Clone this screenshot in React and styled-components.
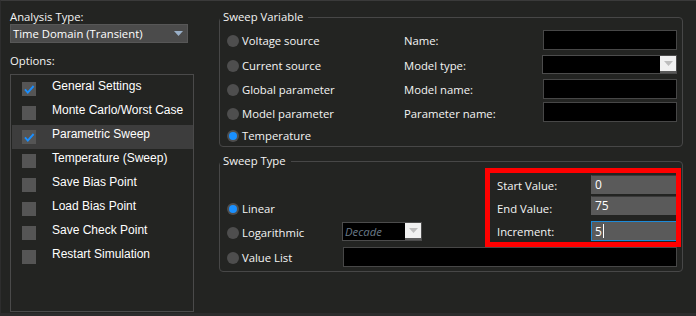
import React from 'react';
import styled, { createGlobalStyle } from 'styled-components';

const Global = createGlobalStyle`
  html, body { margin: 0; padding: 0; background: #232422; }
  *, *::before, *::after { box-sizing: border-box; }
`;

const UI = `"Open Sans", "Noto Sans", sans-serif`;

const Window = styled.div`
  width: 696px;
  height: 316px;
  background: #232422;
  border-top: 1px solid #3a3a3a;
  border-left: 1px solid #2d2d2d;
  border-bottom: 3px solid #2c2c2c;
  padding: 9px 0 0 9px;
  display: flex;
  gap: 25px;
  font-family: ${UI};
  font-size: 11.3px;
  color: #f4f4f4;
  overflow: hidden;
`;

const LeftCol = styled.div`
  width: 184px;
  display: flex;
  flex-direction: column;
`;

const FieldLabel = styled.div`
  line-height: 14px;
  height: 14px;
  margin-top: ${p => p.$mt || 0}px;
  white-space: nowrap;
`;

const Select = styled.div`
  width: 178px;
  height: 19px;
  background: #4b4b4b;
  border: 1px solid #575757;
  display: flex;
  align-items: center;
  justify-content: space-between;
  padding: 0 4px 0 2px;
  font-size: 11.3px;
  color: #fff;
`;

const OptionsList = styled.div`
  margin-top: 6px;
  height: 238px;
  border: 1px solid #4a4a4a;
  padding: 2px 0 0 1px;
  display: flex;
  flex-direction: column;
`;

const OptionRow = styled.div`
  height: 24px;
  display: flex;
  align-items: center;
  padding-left: 10px;
  gap: 16px;
  background: ${p => (p.$selected ? '#3d3d3d' : 'transparent')};
  font-family: "Liberation Sans", Arial, sans-serif;
  font-size: 12px;
  color: #fff;
`;

const OptionText = styled.span`
  line-height: 14px;
  margin-bottom: 7px;
  white-space: nowrap;
`;

const CheckBox = styled.span`
  width: 14px;
  height: 14px;
  background: #555;
  display: inline-flex;
  flex: none;
`;

const RightCol = styled.div`
  width: 464px;
  display: flex;
  flex-direction: column;
`;

const Group = styled.fieldset`
  margin: ${p => p.$mt || 0}px 0 0 0;
  padding: ${p => p.$pad};
  border: 1px solid #474747;
  border-radius: 4px;
  min-width: 0;
`;

const Legend = styled.legend`
  padding: 0 5px 0 3px;
  margin-left: -7px;
  line-height: 14px;
  font-size: 11.3px;
  color: #f4f4f4;
`;

const VarGrid = styled.div`
  display: grid;
  grid-template-columns: 177px 139px 134px;
  grid-template-rows: 24px 25px 24px 23px 21px;
  align-items: center;
`;

const TypeGrid = styled.div`
  display: grid;
  grid-template-columns: 115px 143px 196px;
  grid-template-rows: 28px 25px 24px 25px;
  align-items: center;
`;

const RadioWrap = styled.label`
  display: flex;
  align-items: center;
  gap: 3px;
  line-height: 14px;
  white-space: nowrap;
  grid-column: ${p => p.$col || 'auto'};
  grid-row: ${p => p.$row || 'auto'};
`;

const RadioDot = styled.span`
  width: 12px;
  height: 12px;
  border-radius: 50%;
  background: #4e4e4e;
  flex: none;
  display: inline-flex;
  align-items: center;
  justify-content: center;
  &::after {
    content: '';
    width: 8px;
    height: 8px;
    border-radius: 50%;
    background: ${p => (p.$on ? '#1a90ff' : 'transparent')};
  }
`;

const GridLabel = styled.span`
  line-height: 14px;
  white-space: nowrap;
  grid-column: ${p => p.$col || 'auto'};
  grid-row: ${p => p.$row || 'auto'};
`;

const TextBox = styled.div`
  width: ${p => p.$w || 134}px;
  height: ${p => p.$h || 20}px;
  background: #000;
  border: 1px solid #474747;
  margin-bottom: ${p => (p.$mb === undefined ? 3 : p.$mb)}px;
  margin-left: ${p => p.$ml || 0}px;
  grid-column: ${p => p.$col || 'auto'};
  grid-row: ${p => p.$row || 'auto'};
`;

const Combo = styled.div`
  width: ${p => p.$w}px;
  height: 19px;
  background: #000;
  border: 1px solid #4c4c4c;
  display: flex;
  align-items: stretch;
  margin-bottom: ${p => p.$mb || 0}px;
  margin-left: ${p => p.$ml || 0}px;
  grid-column: ${p => p.$col || 'auto'};
  grid-row: ${p => p.$row || 'auto'};
`;

const ComboText = styled.span`
  flex: 1;
  padding-left: 2px;
  font-style: italic;
  color: #6a7a88;
  line-height: 17px;
  font-size: 11.3px;
`;

const ComboButton = styled.span`
  width: 16px;
  background: #f0f0f0;
  border-bottom: 2px solid #5a5a5a;
  display: flex;
  align-items: center;
  justify-content: center;
`;

const RangeBox = styled.div`
  grid-column: 3;
  grid-row: 1 / span 3;
  align-self: start;
  height: 79px;
  border: 5px solid #ff0000;
  padding: 2px 0 0 7px;
  overflow: hidden;
  display: grid;
  grid-template-columns: 94px 90px;
  grid-template-rows: 21px 25px 21px;
  z-index: 1;
  background: #232422;
`;

const RangeLabel = styled.span`
  align-self: center;
  line-height: 14px;
  white-space: nowrap;
`;

const ValueInput = styled.div`
  align-self: start;
  width: 90px;
  height: ${p => p.$h}px;
  background: #5a5a5a;
  border: 1px solid ${p => (p.$focus ? '#1d8ad8' : '#5a5a5a')};
  border-top-color: ${p => (p.$focus ? '#1d8ad8' : '#3a3a3a')};
  padding-left: 3px;
  display: flex;
  align-items: center;
  color: #fff;
  font-size: 12px;
`;

const Caret = styled.span`
  width: 1px;
  height: 14px;
  background: #fff;
  margin-left: 1px;
`;

const Arrow = ({ color = '#9ab0c8' }) => (
  <svg width="9" height="5" viewBox="0 0 9 5">
    <path d="M0 0 H9 L4.5 5 Z" fill={color} />
  </svg>
);

const Check = () => (
  <svg width="14" height="14" viewBox="0 0 14 14">
    <path d="M3 7.4 L5.8 10.6 L11.6 4" fill="none" stroke="#1a8fff" strokeWidth="1.9" />
  </svg>
);

const options = [
  { label: 'General Settings', checked: true },
  { label: 'Monte Carlo/Worst Case' },
  { label: 'Parametric Sweep', checked: true, selected: true },
  { label: 'Temperature (Sweep)' },
  { label: 'Save Bias Point' },
  { label: 'Load Bias Point' },
  { label: 'Save Check Point' },
  { label: 'Restart Simulation' },
];

const Radio = ({ on, children, col, row }) => (
  <RadioWrap $col={col} $row={row}>
    <RadioDot $on={on} />
    {children}
  </RadioWrap>
);

export default function App() {
  return (
    <>
      <Global />
      <Window>
        <LeftCol>
          <FieldLabel>Analysis Type:</FieldLabel>
          <Select>
            <span>Time Domain (Transient)</span>
            <Arrow />
          </Select>
          <FieldLabel $mt={11}>Options:</FieldLabel>
          <OptionsList>
            {options.map(o => (
              <OptionRow key={o.label} $selected={o.selected}>
                <CheckBox>{o.checked && <Check />}</CheckBox>
                <OptionText>{o.label}</OptionText>
              </OptionRow>
            ))}
          </OptionsList>
        </LeftCol>

        <RightCol>
          <Group $pad="5px 5px 0 7px">
            <Legend>Sweep Variable</Legend>
            <VarGrid>
              <Radio col={1} row={1}>Voltage source</Radio>
              <GridLabel $col={2} $row={1}>Name:</GridLabel>
              <TextBox $col={3} $row={1} $h={20} />

              <Radio col={1} row={2}>Current source</Radio>
              <GridLabel $col={2} $row={2}>Model type:</GridLabel>
              <Combo $w={135} $col={3} $row={2} $mb={3} $ml={-1}>
                <ComboText />
                <ComboButton><Arrow color="#bdbdbd" /></ComboButton>
              </Combo>

              <Radio col={1} row={3}>Global parameter</Radio>
              <GridLabel $col={2} $row={3}>Model name:</GridLabel>
              <TextBox $col={3} $row={3} $h={20} />

              <Radio col={1} row={4}>Model parameter</Radio>
              <GridLabel $col={2} $row={4}>Parameter name:</GridLabel>
              <TextBox $col={3} $row={4} $h={20} />

              <Radio on col={1} row={5}>Temperature</Radio>
            </VarGrid>
          </Group>

          <Group $mt={7} $pad="0 1px 1px 7px">
            <Legend>Sweep Type</Legend>
            <TypeGrid>
              <Radio on col={1} row={2}>Linear</Radio>
              <Radio col={1} row={3}>Logarithmic</Radio>
              <Combo $w={80} $col={2} $row={3} $mb={3}>
                <ComboText>Decade</ComboText>
                <ComboButton><Arrow color="#bdbdbd" /></ComboButton>
              </Combo>
              <Radio col={1} row={4}>Value List</Radio>
              <TextBox $col="2 / span 2" $row={4} $w={334} $ml={1} $h={20} $mb={2} />
              <RangeBox>
                <RangeLabel>Start Value:</RangeLabel>
                <ValueInput $h={19}>0</ValueInput>
                <RangeLabel>End Value:</RangeLabel>
                <ValueInput $h={19}>75</ValueInput>
                <RangeLabel>Increment:</RangeLabel>
                <ValueInput $h={20} $focus>5<Caret /></ValueInput>
              </RangeBox>
            </TypeGrid>
          </Group>
        </RightCol>
      </Window>
    </>
  );
}
